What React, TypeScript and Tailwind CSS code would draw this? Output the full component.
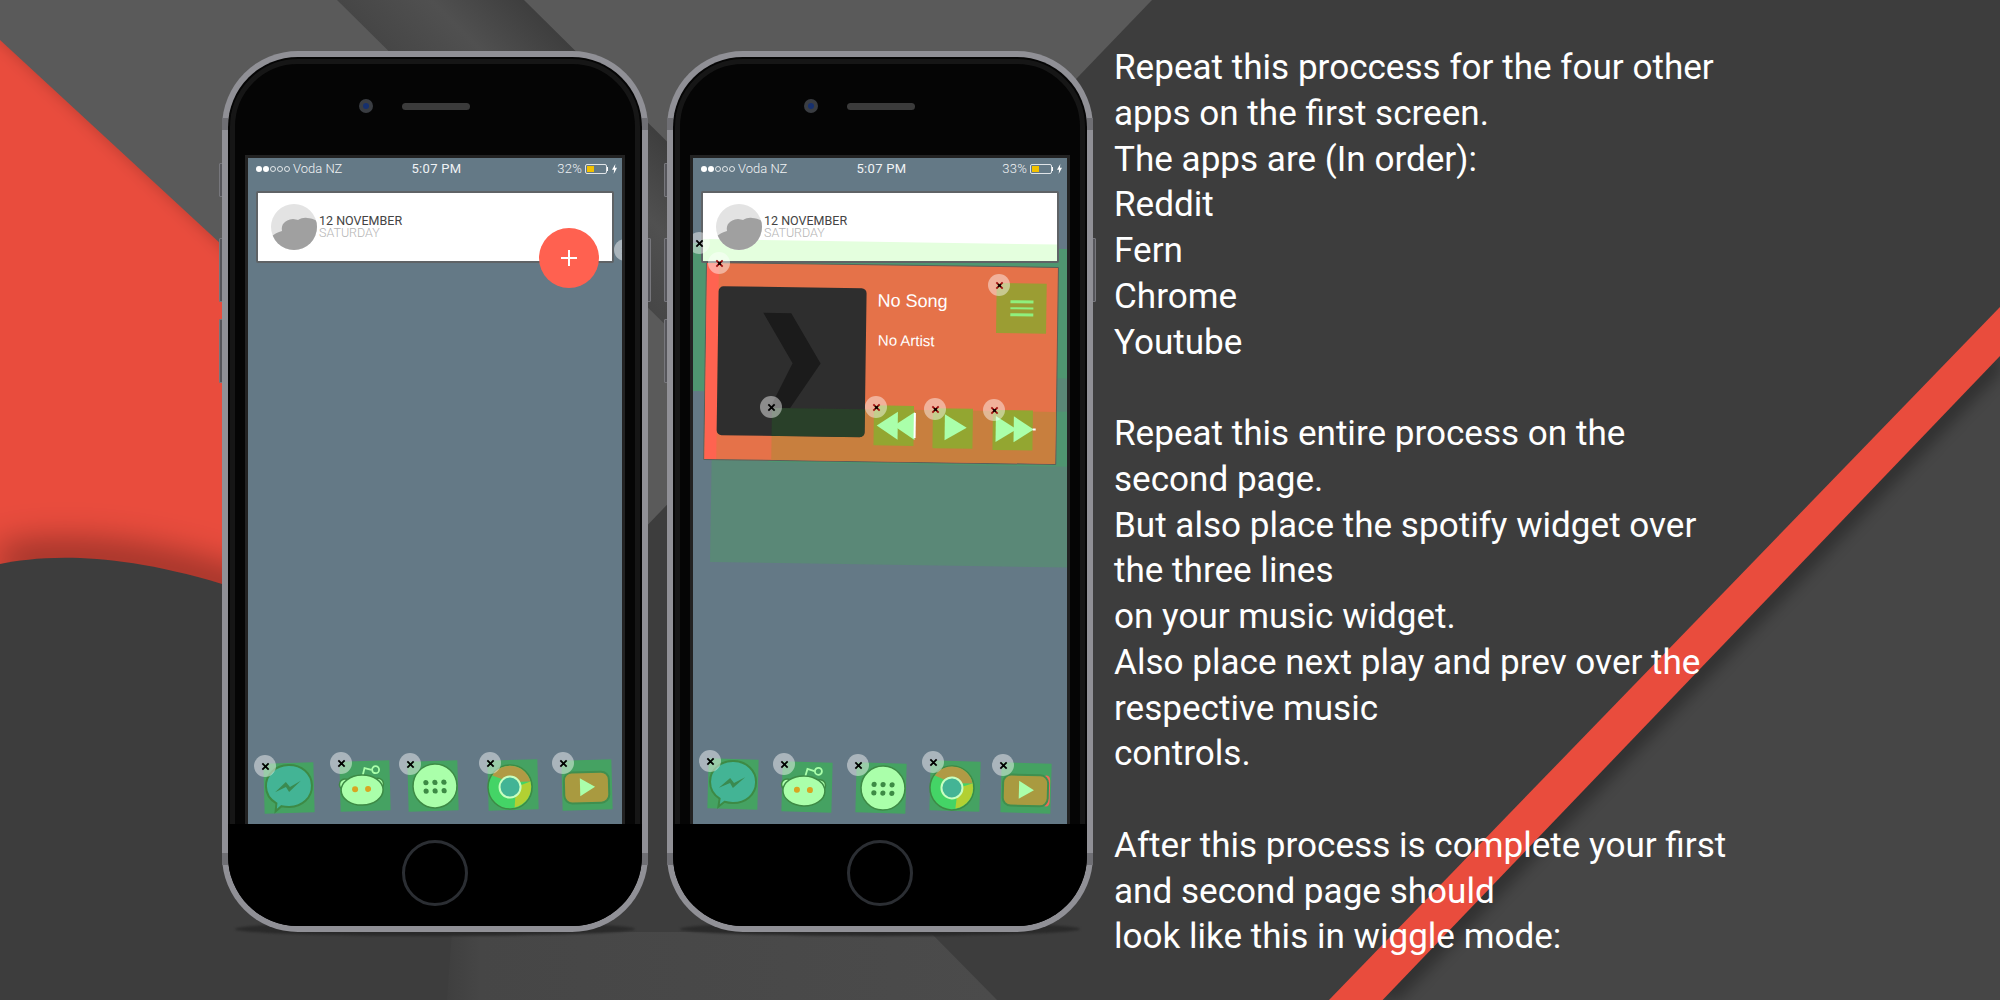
import React from "react";

const LINES = [
  "Repeat this proccess for the four other",
  "apps on the first screen.",
  "The apps are (In order):",
  "Reddit",
  "Fern",
  "Chrome",
  "Youtube",
  "",
  "Repeat this entire process on the",
  "second page.",
  "But also place the spotify widget over",
  "the three lines",
  "on your music widget.",
  "Also place next play and prev over the",
  "respective music",
  "controls.",
  "",
  "After this process is complete your first",
  "and second page should",
  "look like this in wiggle mode:",
];

const STROKE = "#3d8a45";
const PALE = "#aaffaa";

function Messenger() {
  return (
    <svg viewBox="0 0 50 50" className="absolute inset-0 h-full w-full overflow-visible">
      <path d="M12 40 C4 35 2 28 2 23 C2 11 12 2 25 2 C38 2 48 11 48 23 C48 35 38 44 25 44 C22 44 19 43.500 17 43 L11 48 Z" fill="#43b495" stroke={STROKE} strokeWidth="2" />
      <polygon points="11,29 22,19 26,24 37,18 25,29 22,24" fill="#3a8a50" />
    </svg>
  );
}

function Reddit() {
  return (
    <svg viewBox="0 0 50 50" className="absolute inset-0 h-full w-full overflow-visible">
      <path d="M22 18 L25 7 L32 9" fill="none" stroke={PALE} strokeWidth="1.800" />
      <circle cx="36" cy="9" r="3.500" fill="#45a262" stroke={PALE} strokeWidth="1.800" />
      <circle cx="5" cy="23" r="5.500" fill={PALE} stroke={STROKE} strokeWidth="1.500" />
      <circle cx="38" cy="23" r="5.500" fill={PALE} stroke={STROKE} strokeWidth="1.500" />
      <ellipse cx="22" cy="29" rx="21" ry="15" fill={PALE} stroke={STROKE} strokeWidth="1.500" />
      <circle cx="15" cy="28" r="3" fill="#d8a622" />
      <circle cx="28" cy="28" r="3" fill="#d8a622" />
    </svg>
  );
}

function Apps() {
  return (
    <svg viewBox="0 0 50 50" className="absolute inset-0 h-full w-full overflow-visible">
      <circle cx="27" cy="25" r="22" fill={PALE} stroke={STROKE} strokeWidth="1.500" />
      {[18, 27, 36].map((x) => (
        <React.Fragment key={x}>
          <circle cx={x} cy="21.500" r="2.600" fill={STROKE} />
          <circle cx={x} cy="30" r="2.600" fill={STROKE} />
        </React.Fragment>
      ))}
    </svg>
  );
}

function Chrome() {
  return (
    <svg viewBox="0 0 50 50" className="absolute inset-0 h-full w-full overflow-visible">
      <circle cx="22" cy="27" r="22" fill="#44d466" stroke={STROKE} strokeWidth="1.500" />
      <path d="M4.500 15 A21 21 0 0 1 42.500 22 L22 22 Z" fill="#b09a45" />
      <path d="M42.500 22 A21 21 0 0 1 26 47.500 L28 27 Z" fill="#b2d033" />
      <circle cx="22" cy="27" r="10.500" fill="#43b495" stroke="#c8ffc0" strokeWidth="2" />
    </svg>
  );
}

function Youtube({ bar }: { bar?: boolean }) {
  return (
    <svg viewBox="0 0 50 50" className="absolute inset-0 h-full w-full overflow-visible">
      {bar && <rect x="42" y="12" width="7" height="31" rx="5" fill="#ef6a5a" />}
      <rect x="2" y="12" width="45" height="31" rx="8" fill="#a99a40" stroke="#3f8f4f" strokeWidth="2" />
      <polygon points="18,18 18,36 33,27" fill={PALE} />
    </svg>
  );
}

function Badge({ cls, red }: { cls: string; red?: boolean }) {
  return (
    <div className={`absolute z-30 flex h-[22px] w-[22px] items-center justify-center rounded-full bg-white/45 ${cls}`}>
      <svg viewBox="0 0 10 10" className="h-[9px] w-[9px]">
        <path d="M1.500 1.500 L8.500 8.500 M8.500 1.500 L1.500 8.500" stroke={red ? "#a01010" : "#000"} strokeWidth="2" fill="none" />
        {red && <path d="M3.500 3.500 L6.500 6.500 M6.500 3.500 L3.500 6.500" stroke="#000" strokeWidth="1.500" fill="none" />}
      </svg>
    </div>
  );
}

function Tile({ cls, children }: { cls: string; children: React.ReactNode }) {
  return <div className={`absolute h-[50px] w-[50px] bg-[#45a262] ${cls}`}>{children}</div>;
}

function Cloud() {
  return (
    <svg viewBox="0 0 46 46" className="relative z-10 h-[46px] w-[46px] shrink-0">
      <clipPath id="wc">
        <circle cx="23" cy="23" r="23" />
      </clipPath>
      <circle cx="23" cy="23" r="23" fill="#e3e3e3" />
      <path d="M0 33 C3 30 7 28 11 27 C10 21 13 16 22 15 C24 15 26 16 27 16 C30 14 34 13.500 36 14 C39 14 43 15 46 17 L46 46 L0 46 Z" fill="#a0a0a0" clipPath="url(#wc)" />
    </svg>
  );
}

function StatusBar({ pct }: { pct: string }) {
  return (
    <div className="grid h-[33px] grid-cols-3 items-center pb-[11px] pl-[8px] pr-[5px] font-['Roboto',sans-serif] text-[13px] text-[#f0f3f5]">
      <div className="flex items-center">
        <span className="h-[6px] w-[6px] rounded-full bg-white" />
        <span className="ml-[1px] h-[6px] w-[6px] rounded-full bg-white" />
        <span className="ml-[1px] h-[6px] w-[6px] rounded-full border border-white/80" />
        <span className="ml-[1px] h-[6px] w-[6px] rounded-full border border-white/80" />
        <span className="ml-[1px] h-[6px] w-[6px] rounded-full border border-white/80" />
        <span className="ml-[3px] font-light">Voda NZ</span>
      </div>
      <div className="text-center tracking-[0.3px]">5:07 PM</div>
      <div className="flex items-center justify-end">
        <span className="font-light tracking-[0.2px]">{pct}</span>
        <span className="ml-[3px] flex h-[10px] w-[22px] items-center rounded-[2px] border border-white/80 p-[1px]">
          <span className="h-full w-[7px] bg-[#f2c100]" />
        </span>
        <span className="h-[4px] w-[1px] bg-white" />
        <svg viewBox="0 0 6 12" className="ml-[4px] h-[10px] w-[5px]">
          <polygon points="4,0 0,7 2.500,7 2,12 6,4.500 3.500,4.500" fill="#fff" />
        </svg>
      </div>
    </div>
  );
}

function Card({ children }: { children?: React.ReactNode }) {
  return (
    <div className="relative mx-[8px] h-[72px] overflow-hidden rounded-[2px] border-2 border-[#5f6366] bg-white">
      {children}
      <div className="relative flex h-full items-center pl-[13px]">
        <Cloud />
        <div className="relative z-10 ml-[2px] font-['Roboto',sans-serif] text-[12.5px] leading-[12px]">
          <div className="text-[#444]">12 NOVEMBER</div>
          <div className="font-light text-[#b4b4b4]">SATURDAY</div>
        </div>
      </div>
    </div>
  );
}

function Phone({ pct, children, cardInner }: { pct: string; children: React.ReactNode; cardInner?: React.ReactNode }) {
  return (
    <div className="relative h-[881px] w-[426px] shrink-0">
      <div className="absolute -left-[3px] top-[112px] h-[34px] w-[4px] rounded-[1px] border border-[#77777c] bg-[#55555a]" />
      <div className="absolute -left-[3px] top-[187px] h-[64px] w-[4px] rounded-[1px] border border-[#77777c] bg-[#55555a]" />
      <div className="absolute -left-[3px] top-[268px] h-[64px] w-[4px] rounded-[1px] border border-[#77777c] bg-[#55555a]" />
      <div className="absolute -right-[3px] top-[187px] h-[64px] w-[4px] rounded-[1px] border border-[#77777c] bg-[#55555a]" />
      <div className="absolute bottom-[-4px] left-[13px] right-[13px] h-[14px] rounded-[50%] bg-[#2a2a2a] blur-[1px]" />
      <div className="relative h-full rounded-[76px] bg-[#909096] p-[6px]">
        <div className="absolute left-0 top-[67px] h-[12px] w-[6px] bg-[#6f6f74]" />
        <div className="absolute right-0 top-[67px] h-[12px] w-[6px] bg-[#6f6f74]" />
        <div className="absolute bottom-[67px] left-0 h-[12px] w-[6px] bg-[#6f6f74]" />
        <div className="absolute bottom-[67px] right-0 h-[12px] w-[6px] bg-[#6f6f74]" />
        <div className="relative flex h-full flex-col overflow-hidden rounded-[70px] bg-[#050505]">
          <div className="pointer-events-none absolute inset-[2px] rounded-[68px] border-[5px] border-[#161616]" />
          <div className="relative flex h-[101px] shrink-0 items-start justify-center pr-[42px] pt-[42px]">
            <div className="flex items-center">
              <div className="flex h-[14px] w-[14px] items-center justify-center rounded-full bg-[#3a3d42]">
                <div className="h-[6px] w-[6px] rounded-full bg-[#16306e]" />
              </div>
              <div className="ml-[29px] h-[7px] w-[68px] rounded-full bg-[#3b3b3b]" />
            </div>
          </div>
          <div className="relative mx-[20px] h-[666px] shrink-0 outline-[3px] outline-[#222]">
            <div className="relative h-full overflow-hidden bg-[#647986]">
              <StatusBar pct={pct} />
              {children}
              <Card>{cardInner}</Card>
            </div>
          </div>
          <div className="relative flex h-[102px] shrink-0 items-center justify-center bg-black pb-[4px]">
            <div className="h-[66px] w-[66px] rounded-full border-[3px] border-[#2b2e33]" />
          </div>
        </div>
      </div>
    </div>
  );
}

function Dock1() {
  return (
    <>
      <Tile cls="left-[16px] top-[605px] rotate-[-1.5deg]"><Messenger /></Tile>
      <Tile cls="left-[92px] top-[603px] rotate-[-1.5deg]"><Reddit /></Tile>
      <Tile cls="left-[160px] top-[603px] rotate-[-1.5deg]"><Apps /></Tile>
      <Tile cls="left-[240px] top-[602px] rotate-[-1.5deg]"><Chrome /></Tile>
      <Tile cls="left-[314px] top-[602px] rotate-[-1.5deg]"><Youtube /></Tile>
      <Badge cls="left-[6px] top-[597px]" />
      <Badge cls="left-[82px] top-[594px]" />
      <Badge cls="left-[151px] top-[595px]" />
      <Badge cls="left-[231px] top-[594px]" />
      <Badge cls="left-[304px] top-[594px]" />
    </>
  );
}

function Dock2() {
  return (
    <>
      <Tile cls="left-[15px] top-[601px] rotate-[1.5deg]"><Messenger /></Tile>
      <Tile cls="left-[89px] top-[604px] rotate-[1.5deg]"><Reddit /></Tile>
      <Tile cls="left-[163px] top-[605px] rotate-[1.5deg]"><Apps /></Tile>
      <Tile cls="left-[237px] top-[603px] rotate-[1.5deg]"><Chrome /></Tile>
      <Tile cls="left-[308px] top-[605px] rotate-[1.5deg]"><Youtube bar /></Tile>
      <Badge cls="left-[6px] top-[592px]" />
      <Badge cls="left-[80px] top-[595px]" />
      <Badge cls="left-[154px] top-[596px]" />
      <Badge cls="left-[229px] top-[593px]" />
      <Badge cls="left-[299px] top-[596px]" />
    </>
  );
}

function MusicWidget() {
  return (
    <div className="absolute left-[13px] top-[104px] z-20 h-[198px] w-[353px] origin-top-left rotate-[0.8deg] overflow-hidden rounded-[1px] border border-[#5b5f58] bg-[#e57249]">
      <div className="absolute inset-y-0 left-0 w-[12px] bg-[#ff6350]" />
      <div className="absolute bottom-0 left-[67px] right-0 top-[144px] bg-[#c87f3e]" />
      <div className="absolute left-[12px] top-[23px] h-[149px] w-[148px] overflow-hidden rounded-[5px] bg-[#2e2e2e]">
        <svg viewBox="0 0 148 149" className="absolute inset-0 h-full w-full">
          <polygon points="45,26 73,26 103,76 73,121 53,121 75,76" fill="#1b1b1b" />
        </svg>
        <div className="absolute bottom-0 left-[55px] right-0 top-[121px] bg-[#294029]" />
      </div>
      <div className="absolute left-[171px] top-[25px] font-['Liberation_Sans',sans-serif] text-[18px] leading-[20px] text-white">No Song</div>
      <div className="absolute left-[172px] top-[66px] font-['Liberation_Sans',sans-serif] text-[15px] leading-[18px] text-white">No Artist</div>
      <div className="absolute left-[290px] top-[16px] flex h-[50px] w-[50px] flex-col items-center justify-center gap-[4px] bg-[#9b9d33]">
        <span className="h-[2.500px] w-[23px] bg-[#8ff07d]" />
        <span className="h-[2.500px] w-[23px] bg-[#8ff07d]" />
        <span className="h-[2.500px] w-[23px] bg-[#8ff07d]" />
      </div>
      <div className="absolute left-[169px] top-[140px] h-[40px] w-[40px] bg-[#93a631]">
        <svg viewBox="0 0 40 40" className="absolute inset-0 h-full w-full overflow-visible">
          <polygon points="3,20 24,6 24,34" fill={PALE} />
          <polygon points="20,20 41,6 41,34" fill={PALE} />
          <rect x="40" y="7" width="2" height="25" fill="#fff" />
        </svg>
      </div>
      <div className="absolute left-[228px] top-[142px] h-[40px] w-[40px] bg-[#93a631]">
        <svg viewBox="0 0 40 40" className="absolute inset-0 h-full w-full">
          <polygon points="12,6 34,19 12,32" fill={PALE} />
        </svg>
      </div>
      <div className="absolute left-[288px] top-[143px] h-[40px] w-[40px] bg-[#93a631]">
        <svg viewBox="0 0 40 40" className="absolute inset-0 h-full w-full overflow-visible">
          <polygon points="3,6 24,19 3,32" fill={PALE} />
          <polygon points="21,6 41,19 21,32" fill={PALE} />
          <rect x="40" y="18" width="3" height="2" fill="#fff" />
        </svg>
      </div>
    </div>
  );
}

function Background() {
  const band = "337,0 524,0 900,372 713,372";
  return (
    <svg viewBox="0 0 2000 1000" className="absolute inset-0 h-full w-full">
      <defs>
        <linearGradient id="bandG" gradientUnits="userSpaceOnUse" x1="380" y1="43" x2="473.500" y2="-50.500">
          <stop offset="0" stopColor="#464646" />
          <stop offset="0.5" stopColor="#505050" />
          <stop offset="1" stopColor="#3e3e3e" />
        </linearGradient>
        <linearGradient id="floorG" gradientUnits="userSpaceOnUse" x1="447" y1="0" x2="997" y2="0">
          <stop offset="0" stopColor="#3f3f3f" />
          <stop offset="0.06" stopColor="#464646" />
          <stop offset="1" stopColor="#4b4b4b" />
        </linearGradient>
        <filter id="b18" x="-20%" y="-50%" width="140%" height="200%"><feGaussianBlur stdDeviation="18" /></filter>
        <filter id="b8" x="-20%" y="-20%" width="140%" height="140%"><feGaussianBlur stdDeviation="8" /></filter>
        <clipPath id="redClip"><polygon points="0,40 222,245 420,430 420,800 0,800" /></clipPath>
        <clipPath id="rightClip"><polygon points="2000,307 2000,1000 1329,1000" /></clipPath>
      </defs>
      <rect width="2000" height="1000" fill="#3d3d3d" />
      <polygon points="0,0 1152,0 220,970 0,970" fill="#5a5a5a" />
      <polygon points={band} fill="url(#bandG)" />
      <polygon points="0,40 222,245 420,430 420,800 0,800" fill="#e94c3d" />
      <g clipPath="url(#redClip)">
        <line x1="0" y1="30" x2="420" y2="420" stroke="#000" strokeOpacity="0.22" strokeWidth="14" filter="url(#b8)" />
        <path d="M0 564 C40 556 110 550 222 584 C300 608 400 680 460 780" stroke="#000" strokeOpacity="0.42" strokeWidth="30" fill="none" filter="url(#b18)" />
      </g>
      <path d="M0 564 C40 556 110 550 222 584 C300 608 400 680 460 780 L460 1000 L0 1000 Z" fill="#3d3d3d" />
      <polygon points="452,932 930,932 997,1000 447,1000" fill="url(#floorG)" />
      <polygon points="2000,307 2000,1000 1329,1000" fill="#464646" />
      <g clipPath="url(#rightClip)">
        <polygon points="2000,345 2000,372 1398,1000 1370,1000" fill="#000" fillOpacity="0.35" filter="url(#b8)" />
      </g>
      <polygon points="2000,307 2000,356 1382.600,1000 1329,1000" fill="#e94c3d" />
    </svg>
  );
}

export default function App() {
  return (
    <div className="relative h-[1000px] w-[2000px] overflow-hidden bg-[#3d3d3d]">
      <Background />
      <div className="relative flex items-start pl-[222px] pt-[51px]">
        <Phone pct="32%">
          <Dock1 />
          <div className="absolute left-[291px] top-[70px] z-20 flex h-[60px] w-[60px] items-center justify-center rounded-full bg-[#ff6150]">
            <div className="relative h-[16px] w-[16px]">
              <span className="absolute left-0 top-[7px] h-[2px] w-[16px] bg-white" />
              <span className="absolute left-[7px] top-0 h-[16px] w-[2px] bg-white" />
            </div>
          </div>
          <Badge cls="left-[366px] top-[81px]" />
        </Phone>
        <div className="ml-[19px]">
          <Phone
            pct="33%"
            cardInner={<div className="absolute -left-[20px] top-[49px] h-[60px] w-[420px] rotate-[0.9deg] bg-[#e4ffde]" />}
          >
            <div className="absolute -left-[5px] top-[85px] h-[148px] w-[400px] origin-top-left rotate-[0.9deg] bg-[#4f9670]" />
            <div className="absolute left-[20px] top-[215px] h-[189px] w-[380px] origin-top-left rotate-[0.9deg] bg-[#5a8877]" />
            <div className="absolute left-[76px] top-[249px] h-[55px] w-[330px] origin-top-left rotate-[0.9deg] bg-[#4f9670]" />
            <MusicWidget />
            <Dock2 />
            <Badge cls="left-[-5px] top-[74px]" />
            <Badge cls="left-[15px] top-[94px]" red />
            <Badge cls="left-[295px] top-[116px]" red />
            <Badge cls="left-[67px] top-[238px]" />
            <Badge cls="left-[172px] top-[238px]" red />
            <Badge cls="left-[231px] top-[240px]" red />
            <Badge cls="left-[290px] top-[241px]" red />
          </Phone>
        </div>
        <div className="-mt-[6px] ml-[21px] font-['Roboto',sans-serif] text-[35.1px] leading-[45.75px] text-white">
          {LINES.map((l, i) => (
            <div key={i} className="h-[45.75px] whitespace-nowrap">{l}</div>
          ))}
        </div>
      </div>
    </div>
  );
}
